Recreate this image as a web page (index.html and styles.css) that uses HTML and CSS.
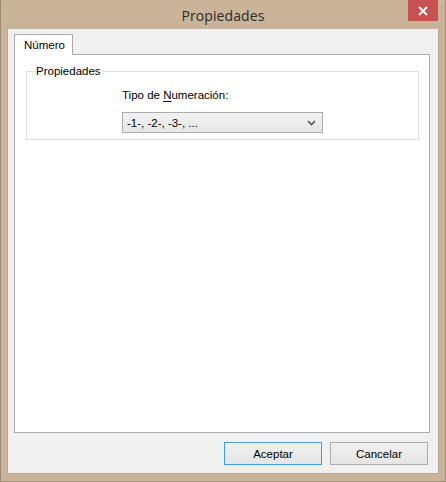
FILE: index.html
```html
<!DOCTYPE html>
<html lang="es">
<head>
<meta charset="utf-8">
<title>Propiedades</title>
<link rel="stylesheet" href="styles.css">
</head>
<body>
<div class="window">
  <div class="titlebar">
    <div class="title">Propiedades</div>
    <div class="close">
      <svg width="10" height="10" viewBox="0 0 10 10"><path d="M1 1 L9 9 M9 1 L1 9" stroke="#fff" stroke-width="2" fill="none"/></svg>
    </div>
  </div>
  <div class="client">
    <div class="tabs">
      <div class="tab">Número</div>
    </div>
    <div class="panel">
      <fieldset class="group">
        <legend class="legend">Propiedades</legend>
        <div class="field">
          <div class="label">Tipo de <u>N</u>umeración:</div>
          <div class="combo">
            <span>-1-, -2-, -3-, ...</span>
            <svg class="chev" width="9" height="6" viewBox="0 0 9 6"><path d="M1 1 L4.5 4.5 L8 1" stroke="#555" stroke-width="1.6" fill="none"/></svg>
          </div>
        </div>
      </fieldset>
    </div>
    <div class="buttons">
      <div class="btn default">Aceptar</div>
      <div class="btn">Cancelar</div>
    </div>
  </div>
</div>
</body>
</html>
```
FILE: styles.css
```css
html, body {
  margin: 0;
  padding: 0;
}
body {
  width: 446px;
  height: 482px;
  overflow: hidden;
  font-family: "Liberation Sans", Arial, sans-serif;
  font-size: 11.5px;
  color: #000;
}
.window {
  box-sizing: border-box;
  width: 446px;
  height: 482px;
  background: #c9b399;
  border: 1px solid #9d8a74;
  border-top-color: #c9b399;
  display: flex;
  flex-direction: column;
  padding: 0 6px 7px 6px;
}
.titlebar {
  height: 29px;
  position: relative;
  display: flex;
  align-items: center;
  justify-content: center;
}
.title {
  font-family: "Open Sans", "Noto Sans", sans-serif;
  font-size: 14px;
  letter-spacing: 0.1px;
  color: #2a2a2a;
  margin-top: 1px;
}
.close {
  position: absolute;
  right: 1px;
  top: -1px;
  width: 30px;
  height: 21px;
  background: #c75050;
  display: flex;
  align-items: center;
  justify-content: center;
}
.client {
  flex: 1;
  background: #f0f0f0;
  border: 1px solid #b8a68e;
  border-top: 0;
  display: flex;
  flex-direction: column;
  padding: 5px 8px 8px 6px;
  box-sizing: border-box;
}
.tabs {
  display: flex;
  height: 20px;
  position: relative;
  z-index: 1;
}
.tab {
  box-sizing: border-box;
  width: 59px;
  height: 21px;
  background: #fff;
  border: 1px solid #acacac;
  border-bottom: 0;
  padding: 4px 0 0 9px;
}
.panel {
  box-sizing: border-box;
  height: 379px;
  background: #fff;
  border: 1px solid #acacac;
  padding: 9px 10px 0 11px;
}
.group {
  margin: 0;
  height: 76px;
  box-sizing: border-box;
  border: 1px solid #dcdcdc;
  padding: 0 0 0 95px;
}
.legend {
  padding: 0 2px;
  margin-left: -88px;
  line-height: 14px;
}
.field {
  padding-top: 9px;
}
.label {
  height: 23px;
  line-height: 16px;
}
.label u {
  text-decoration-thickness: 1px;
  text-underline-offset: 2px;
}
.combo {
  box-sizing: border-box;
  width: 201px;
  height: 21px;
  margin-top: 2px;
  border: 1px solid #acacac;
  background: linear-gradient(#f2f2f2, #e6e6e6);
  display: flex;
  align-items: center;
  justify-content: space-between;
  padding: 0 6px 0 4px;
}
.buttons {
  display: flex;
  justify-content: flex-end;
  gap: 8px;
  margin-top: 9px;
  padding-right: 2px;
}
.btn {
  box-sizing: border-box;
  width: 98px;
  height: 23px;
  border: 1px solid #acacac;
  background: linear-gradient(#f0f0f0, #e5e5e5);
  display: flex;
  align-items: center;
  justify-content: center;
}
.btn.default {
  border-color: #3c9cf0;
}
```
